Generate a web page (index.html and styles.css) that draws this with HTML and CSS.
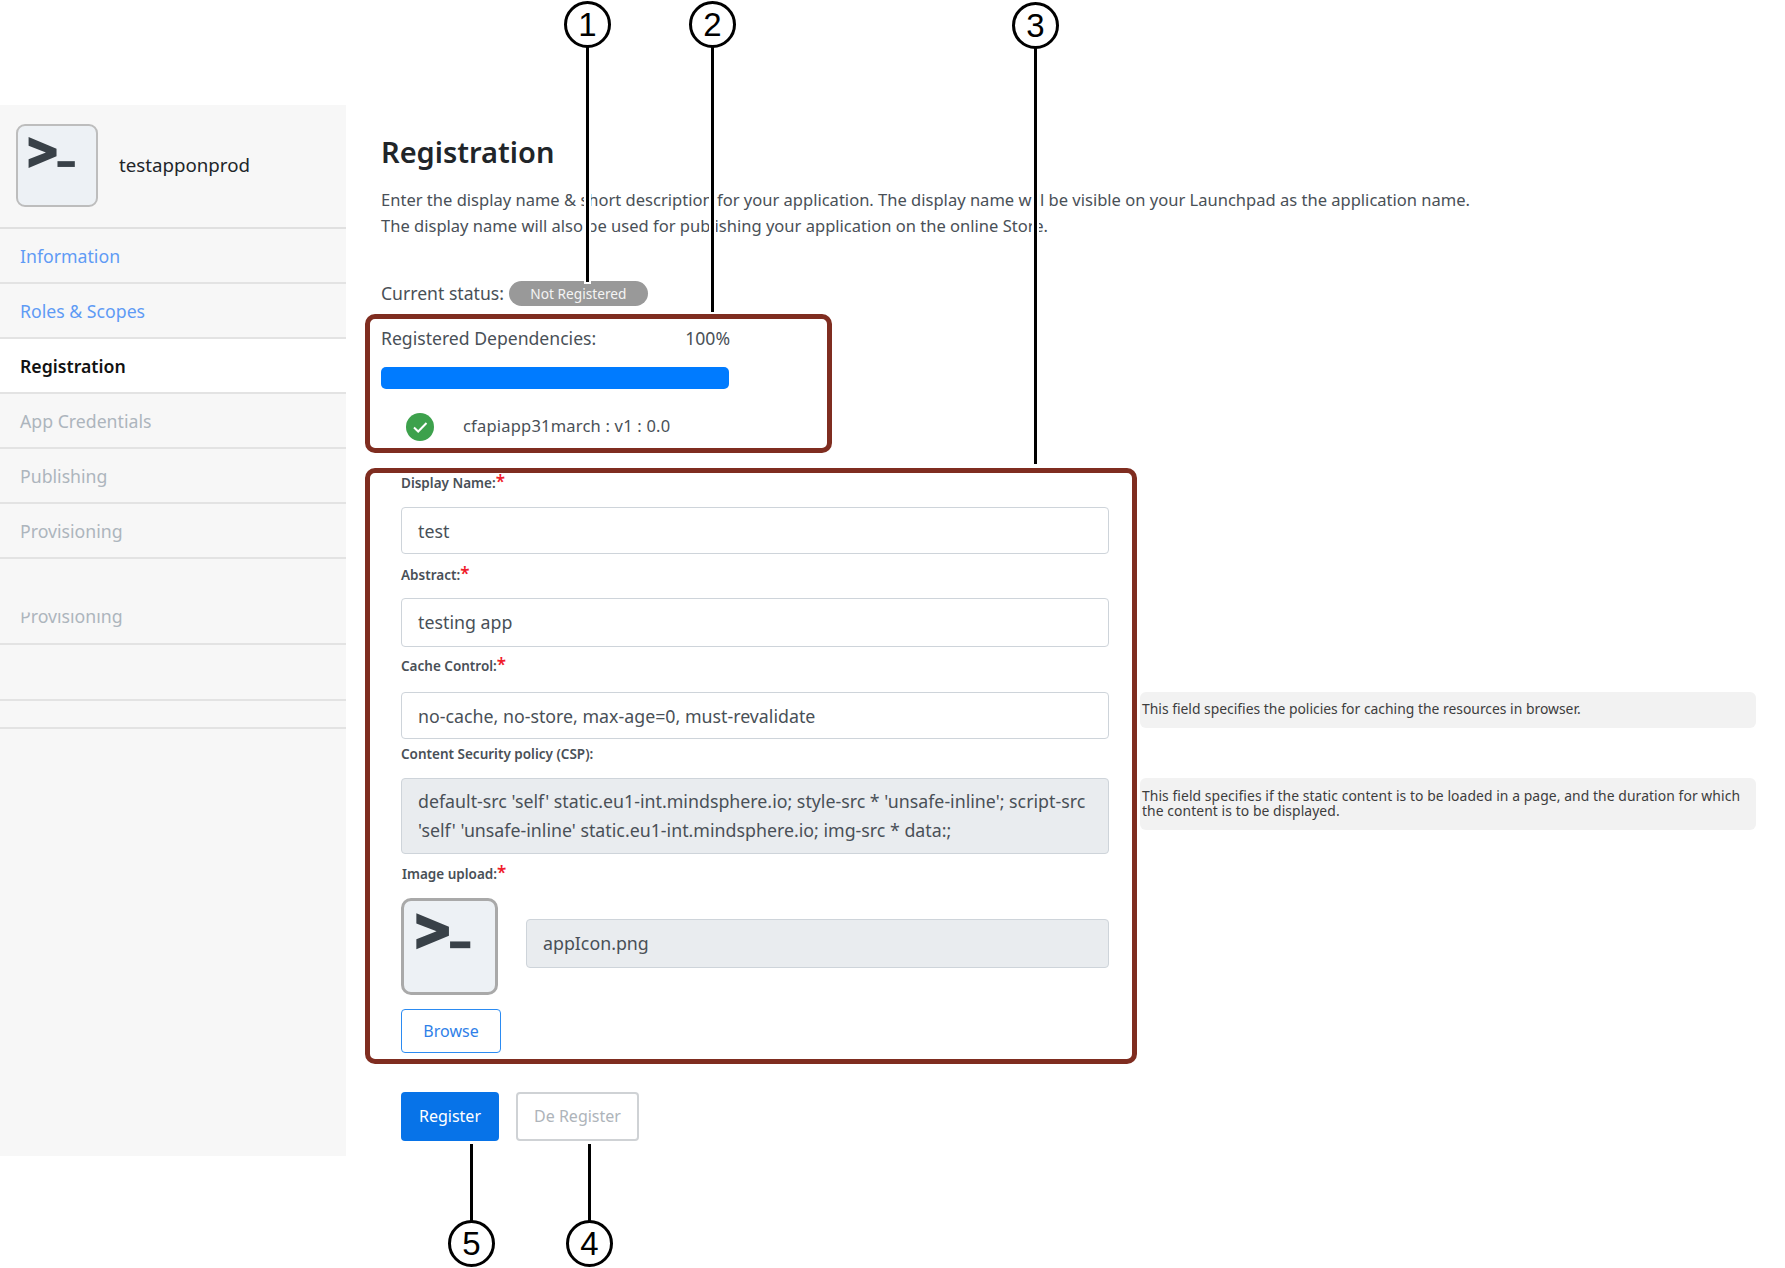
FILE: index.html
```html
<!DOCTYPE html>
<html lang="en">
<head>
  <meta charset="UTF-8" />
  <title>Registration</title>
  <link rel="stylesheet" href="styles.css">
</head>
<body>
  <svg class="icon-defs" aria-hidden="true">
    <symbol id="app-glyph" viewBox="0 0 81 81">
      <polygon points="11,11 40,23 40,31 11,43 11,34 29,27 11,20" />
      <rect x="41" y="36" width="18" height="6" />
    </symbol>
  </svg>

  <div class="page">
    <aside class="sidebar">
      <div class="app-head">
        <div class="app-icon"><svg><use href="#app-glyph"></use></svg></div>
        <span class="app-name">testapponprod</span>
      </div>
      <a class="nav-item link">Information</a>
      <a class="nav-item link">Roles &amp; Scopes</a>
      <a class="nav-item active">Registration</a>
      <a class="nav-item">App Credentials</a>
      <a class="nav-item">Publishing</a>
      <a class="nav-item">Provisioning</a>
      <a class="nav-item tall"><span class="clipped">Provisioning</span></a>
      <a class="nav-item empty"></a>
      <a class="nav-item spacer"></a>
    </aside>

    <main class="content">
      <h1>Registration</h1>
      <p class="intro">Enter the display name &amp; short description for your application. The display name will be visible on your Launchpad as the application name.<br>The display name will also be used for publishing your application on the online Store.</p>

      <div class="status-row">
        <span>Current status:</span>
        <span class="pill">Not Registered</span>
      </div>

      <section class="callout deps">
        <div class="deps-head">
          <span>Registered Dependencies:</span>
          <span>100%</span>
        </div>
        <div class="progress"></div>
        <div class="dep-row">
          <svg class="check" viewBox="0 0 28 28">
            <circle cx="14" cy="14" r="14" />
            <path d="M8 14.5l4.2 4L20.5 10" />
          </svg>
          <span>cfapiapp31march : v1 : 0.0</span>
        </div>
      </section>

      <section class="callout form">
        <label class="field-label">Display Name:<em>*</em></label>
        <div class="field-row row-name"><div class="input">test</div></div>

        <label class="field-label l-abstract">Abstract:<em>*</em></label>
        <div class="field-row row-abstract"><div class="input tall-input">testing app</div></div>

        <label class="field-label l-cache">Cache Control:<em>*</em></label>
        <div class="field-row row-cache">
          <div class="input">no-cache, no-store, max-age=0, must-revalidate</div>
          <div class="hint">This field specifies the policies for caching the resources in browser.</div>
        </div>

        <label class="field-label l-csp">Content Security policy (CSP):</label>
        <div class="field-row row-csp">
          <div class="input readonly multi">default-src 'self' static.eu1-int.mindsphere.io; style-src * 'unsafe-inline'; script-src 'self' 'unsafe-inline' static.eu1-int.mindsphere.io; img-src * data:;</div>
          <div class="hint hint-csp">This field specifies if the static content is to be loaded in a page, and the duration for which the content is to be displayed.</div>
        </div>

        <label class="field-label l-image">Image upload:<em>*</em></label>
        <div class="upload-row">
          <div class="app-icon big"><svg><use href="#app-glyph"></use></svg></div>
          <div class="input readonly file">appIcon.png</div>
        </div>
        <button class="btn btn-outline">Browse</button>
      </section>

      <div class="actions">
        <button class="btn btn-primary">Register</button>
        <button class="btn btn-disabled">De Register</button>
      </div>
    </main>
  </div>

  <!-- numbered callouts drawn over the screenshot -->
  <div class="leader" style="left:586px;top:44px;height:238px"></div>
  <div class="leader" style="left:711px;top:44px;height:268px"></div>
  <div class="leader" style="left:1034px;top:44px;height:420px"></div>
  <div class="leader" style="left:470px;top:1144px;height:78px"></div>
  <div class="leader" style="left:588px;top:1144px;height:78px"></div>
  <div class="badge" style="left:564px;top:1px">1</div>
  <div class="badge" style="left:689px;top:1px">2</div>
  <div class="badge" style="left:1012px;top:2px">3</div>
  <div class="badge" style="left:448px;top:1220px">5</div>
  <div class="badge" style="left:566px;top:1220px">4</div>
</body>
</html>
```

FILE: styles.css
```css
* {
  box-sizing: border-box;
  margin: 0;
  padding: 0;
}
body {
  font-family: "Noto Sans", "Open Sans", sans-serif;
  font-size: 16px;
  color: #495057;
  background: #fff;
  position: relative;
  height: 1268px;
  overflow: hidden;
}
.icon-defs {
  display: none;
}
.page {
  display: flex;
  padding-top: 105px;
}

/* sidebar */
.sidebar {
  width: 346px;
  height: 1051px;
  background: #f7f7f7;
  flex: none;
}
.app-head {
  height: 124px;
  display: flex;
  align-items: center;
  gap: 21px;
  padding: 0 16px 2px;
  border-bottom: 2px solid #e0e0e0;
}
.app-icon {
  width: 82px;
  height: 83px;
  background: #edf1f5;
  border: 2px solid #bdbdbd;
  border-radius: 9px;
  flex: none;
}
.app-icon svg {
  display: block;
  width: 100%;
  height: 100%;
  fill: #394148;
}
.app-name {
  font-size: 18.7px;
  color: #212529;
  margin-bottom: 2px;
}
.nav-item {
  display: flex;
  align-items: center;
  height: 55px;
  padding-left: 20px;
  font-size: 17.7px;
  color: #adb5bd;
  border-bottom: 2px solid #e3e3e3;
}
.nav-item.link {
  color: #5f9bf5;
}
.nav-item.active {
  background: #fff;
  color: #111;
  font-weight: 600;
}
.nav-item.tall {
  height: 86px;
  padding-top: 30px;
}
.clipped {
  display: inline-block;
  line-height: 24px;
  clip-path: inset(8.5px 0 0 0);
}
.nav-item.empty {
  height: 56px;
}
.nav-item.spacer {
  height: 28px;
}

/* main column */
.content {
  padding-left: 19px;
  flex: 1;
}
h1 {
  font-size: 29px;
  font-weight: 600;
  color: #212529;
  line-height: 40px;
  margin: 27px 0 15px 16px;
}
.intro {
  font-size: 16.55px;
  line-height: 25.5px;
  margin-left: 16px;
  white-space: nowrap;
}
.status-row {
  display: flex;
  align-items: center;
  gap: 5px;
  height: 26px;
  margin: 42px 0 8px 16px;
  font-size: 17.6px;
}
.pill {
  width: 139px;
  height: 25px;
  line-height: 25px;
  margin-top: 1px;
  text-align: center;
  background: #999;
  color: #f4f4f4;
  font-size: 13.7px;
  border-radius: 13px;
}
.callout {
  border: 5px solid #7f2d20;
  border-radius: 10px;
}

/* dependencies box */
.deps {
  width: 467px;
  height: 139px;
  padding: 7px 11px 0;
  margin-bottom: 15px;
}
.deps-head {
  display: flex;
  justify-content: space-between;
  width: 349px;
  font-size: 17.6px;
  line-height: 24px;
}
.progress {
  width: 348px;
  height: 22px;
  margin-top: 17px;
  background: #007bff;
  border-radius: 5px;
}
.dep-row {
  display: flex;
  align-items: center;
  gap: 29px;
  padding-left: 25px;
  margin-top: 20px;
  font-size: 16.5px;
  letter-spacing: 0.2px;
}
.check {
  width: 28px;
  height: 28px;
  flex: none;
  margin-top: 4px;
}
.check circle {
  fill: #3da14c;
}
.check path {
  fill: none;
  stroke: #fff;
  stroke-width: 2;
}

/* form box */
.form {
  width: 772px;
  height: 596px;
  padding: 0 21px 0 31px;
}
.field-label {
  display: block;
  font-size: 13.5px;
  font-weight: 600;
  line-height: 20px;
  color: #495057;
}
.field-label em {
  color: #f01c2c;
  font-style: normal;
  font-size: 17px;
  line-height: 14px;
  vertical-align: 0;
}
.l-abstract { margin-top: 11px; }
.l-cache { margin-top: 9px; }
.l-csp { margin-top: 5px; }
.l-image { margin: 10px 0 0 1px; }
.field-row {
  display: flex;
  gap: 31px;
}
.row-name { margin-top: 14px; }
.row-abstract { margin-top: 13px; }
.row-cache { margin-top: 16px; }
.row-csp { margin-top: 14px; }
.input {
  flex: 0 0 708px;
  height: 47px;
  line-height: 47px;
  padding: 0 16px;
  font-size: 17.8px;
  background: #fff;
  border: 1px solid #ced4da;
  border-radius: 4px;
  white-space: nowrap;
}
.tall-input {
  height: 49px;
  line-height: 47px;
}
.readonly {
  background: #e9ecef;
}
.multi {
  height: 76px;
  line-height: 29px;
  padding-top: 8px;
  white-space: normal;
}
.hint {
  flex: 0 0 616px;
  height: 36px;
  padding: 9px 2px 0;
  background: #f2f2f2;
  border-radius: 6px;
  font-size: 13.9px;
  line-height: 15px;
  color: #3d3d3d;
}
.hint-csp {
  height: 52px;
  padding-top: 10px;
  letter-spacing: 0.07px;
}
.upload-row {
  display: flex;
  align-items: center;
  gap: 28px;
  margin-top: 14px;
}
.app-icon.big {
  width: 97px;
  height: 97px;
  border-width: 3px;
  border-color: #a9a9a9;
  border-radius: 10px;
}
.file {
  flex: 0 0 583px;
  height: 49px;
  line-height: 47px;
  margin-bottom: 6px;
}
.btn {
  display: block;
  font-family: inherit;
  font-size: 16px;
  border-radius: 4px;
  cursor: pointer;
  background: #fff;
}
.btn-outline {
  width: 100px;
  height: 44px;
  margin-top: 14px;
  color: #2f7fe8;
  border: 1px solid #2b8bf2;
}
.actions {
  display: flex;
  gap: 17px;
  margin: 28px 0 0 36px;
}
.btn-primary {
  width: 98px;
  height: 49px;
  padding-bottom: 2px;
  color: #fff;
  background: #0773e8;
  border: none;
}
.btn-disabled {
  width: 123px;
  height: 49px;
  padding-bottom: 2px;
  color: #aeb4ba;
  border: 2px solid #cfd2d5;
}

/* callout overlays */
.leader {
  position: absolute;
  width: 3px;
  background: #000;
  box-shadow: 0 0 0 2px #fff;
}
.badge {
  position: absolute;
  width: 47px;
  height: 47px;
  border: 3px solid #000;
  border-radius: 50%;
  background: #fff;
  color: #000;
  font-family: "Liberation Sans", sans-serif;
  font-size: 33px;
  line-height: 41px;
  text-align: center;
}
```
